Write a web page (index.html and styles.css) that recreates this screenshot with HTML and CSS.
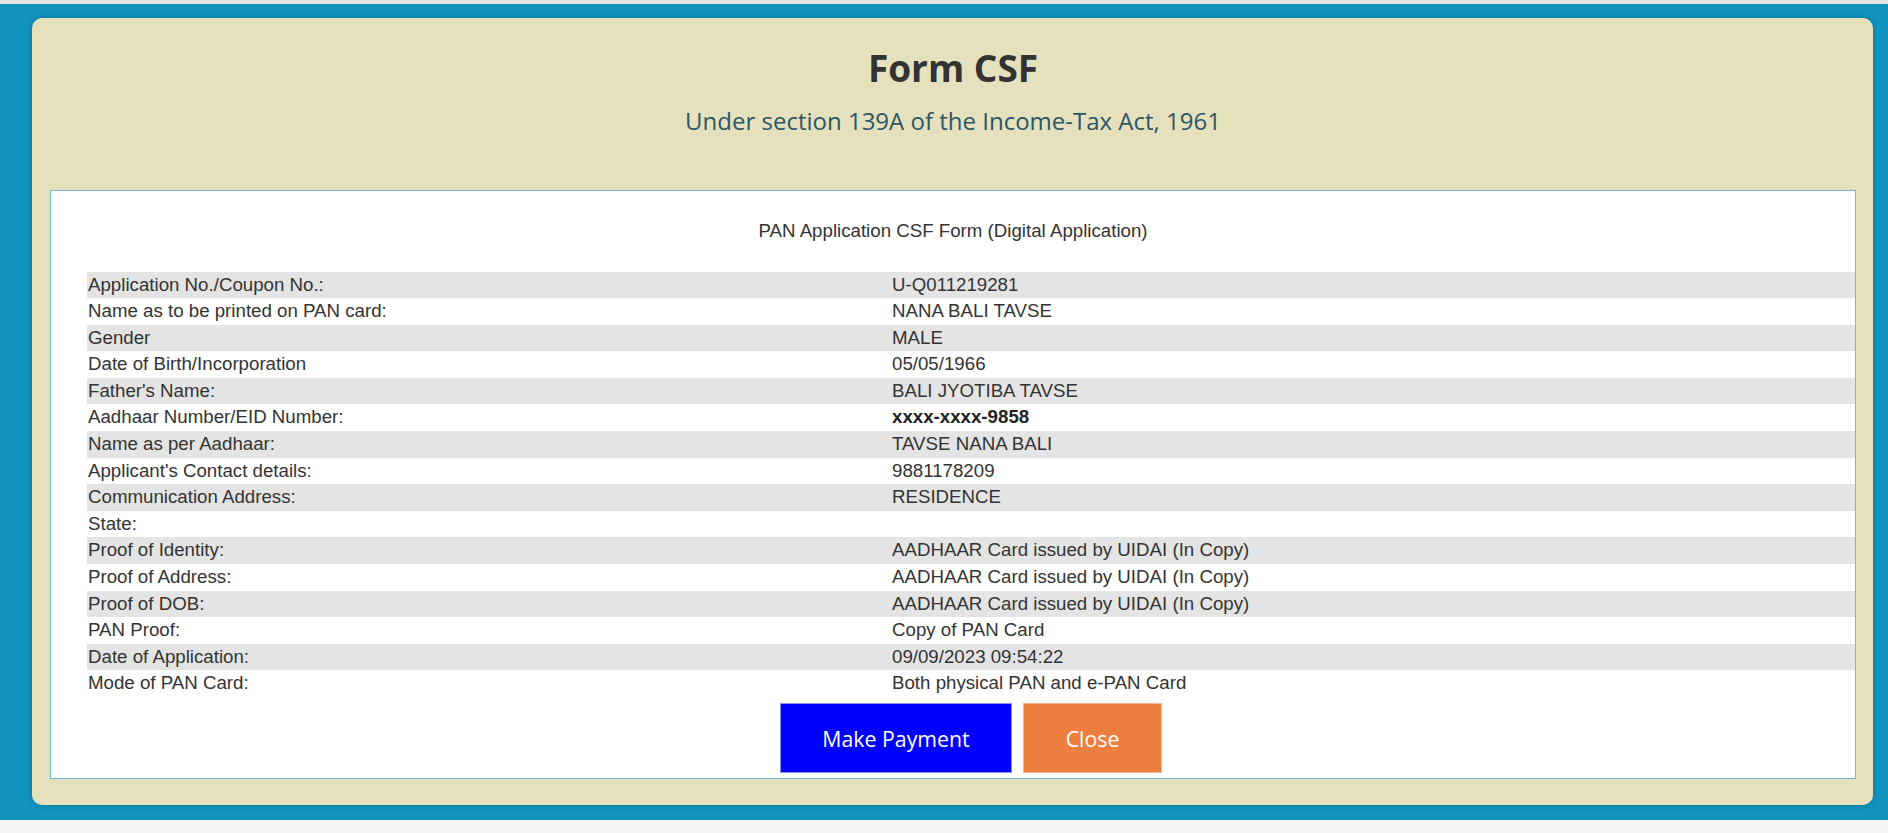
FILE: index.html
```html
<!DOCTYPE html>
<html lang="en">
<head>
<meta charset="utf-8">
<title>Form CSF</title>
<link rel="stylesheet" href="styles.css">
</head>
<body>
<div class="page">
  <div class="panel">
    <header class="panel-head">
      <h1 class="title">Form CSF</h1>
      <p class="subtitle">Under section 139A of the Income-Tax Act, 1961</p>
    </header>
    <section class="sheet">
      <h2 class="sheet-title">PAN Application CSF Form (Digital Application)</h2>
      <div class="sheet-body">
        <table class="details">
          <colgroup><col class="col-label"><col class="col-value"></colgroup>
          <tbody>
            <tr><td>Application No./Coupon No.:</td><td>U-Q011219281</td></tr>
            <tr><td>Name as to be printed on PAN card:</td><td>NANA BALI TAVSE</td></tr>
            <tr><td>Gender</td><td>MALE</td></tr>
            <tr><td>Date of Birth/Incorporation</td><td>05/05/1966</td></tr>
            <tr><td>Father's Name:</td><td>BALI JYOTIBA TAVSE</td></tr>
            <tr><td>Aadhaar Number/EID Number:</td><td><b>xxxx-xxxx-9858</b></td></tr>
            <tr><td>Name as per Aadhaar:</td><td>TAVSE NANA BALI</td></tr>
            <tr><td>Applicant's Contact details:</td><td>9881178209</td></tr>
            <tr><td>Communication Address:</td><td>RESIDENCE</td></tr>
            <tr><td>State:</td><td></td></tr>
            <tr><td>Proof of Identity:</td><td>AADHAAR Card issued by UIDAI (In Copy)</td></tr>
            <tr><td>Proof of Address:</td><td>AADHAAR Card issued by UIDAI (In Copy)</td></tr>
            <tr><td>Proof of DOB:</td><td>AADHAAR Card issued by UIDAI (In Copy)</td></tr>
            <tr><td>PAN Proof:</td><td>Copy of PAN Card</td></tr>
            <tr><td>Date of Application:</td><td>09/09/2023 09:54:22</td></tr>
            <tr><td>Mode of PAN Card:</td><td>Both physical PAN and e-PAN Card</td></tr>
          </tbody>
        </table>
        <div class="actions">
          <button class="btn btn-pay" type="button">Make Payment</button>
          <button class="btn btn-close" type="button">Close</button>
        </div>
      </div>
    </section>
  </div>
</div>
</body>
</html>
```

FILE: styles.css
```css
* { box-sizing: border-box; }

html, body {
  margin: 0;
  padding: 0;
}

body {
  background: #f4f4f4;
  border-top: 4px solid #e4e4e4;
  height: 833px;
  overflow: hidden;
  font-family: "Liberation Sans", Arial, sans-serif;
  color: #333;
}

.page {
  background: #1195bf;
  padding: 14px 15px 15px 32px;
  height: 816px;
}

.panel {
  background: #e5e1bd;
  border-radius: 10px;
  height: 787px;
  padding: 25px 17px 26px 18px;
  display: flex;
  flex-direction: column;
  box-shadow: 0 0 6px rgba(0, 40, 70, 0.35);
}

.panel-head {
  text-align: center;
  height: 147px;
  flex: none;
}

.title {
  margin: 0;
  font-family: "Open Sans", sans-serif;
  font-weight: 700;
  font-size: 37px;
  line-height: 50px;
  color: #333;
}

.subtitle {
  margin: 11px 0 0;
  font-family: "Open Sans", sans-serif;
  font-weight: 400;
  font-size: 24px;
  line-height: 33px;
  color: #2d5566;
}

.sheet {
  flex: 1;
  background: #fff;
  border: 1px solid #72b8dc;
  display: flex;
  flex-direction: column;
}

.sheet-title {
  margin: 29px 0 0;
  text-align: center;
  font-weight: 400;
  font-size: 18.7px;
  line-height: 21.5px;
  color: #333;
}

.sheet-body {
  margin-top: 30px;
  padding-left: 36px;
}

.details {
  width: 100%;
  border-collapse: collapse;
  font-size: 18.7px;
  line-height: 20.6px;
  color: #333;
}

.col-label { width: 804px; }

.details td {
  padding: 3px 0 3px 1px;
  vertical-align: top;
}

.details tr:nth-child(odd) td {
  background: #e4e4e4;
}

.details b {
  font-weight: 700;
  color: #222;
}

.actions {
  display: flex;
  justify-content: center;
  gap: 11px;
  margin-top: 6px;
}

.btn {
  height: 70px;
  border: 1px solid transparent;
  font-family: "Open Sans", sans-serif;
  font-size: 21.3px;
  color: #fff;
  padding: 0;
  cursor: pointer;
}

.btn-pay {
  width: 232px;
  background: #0000ff;
  border-color: #8d8dff;
}

.btn-close {
  width: 139px;
  background: #ec7f3d;
  border-color: #f4b48d;
}
```
